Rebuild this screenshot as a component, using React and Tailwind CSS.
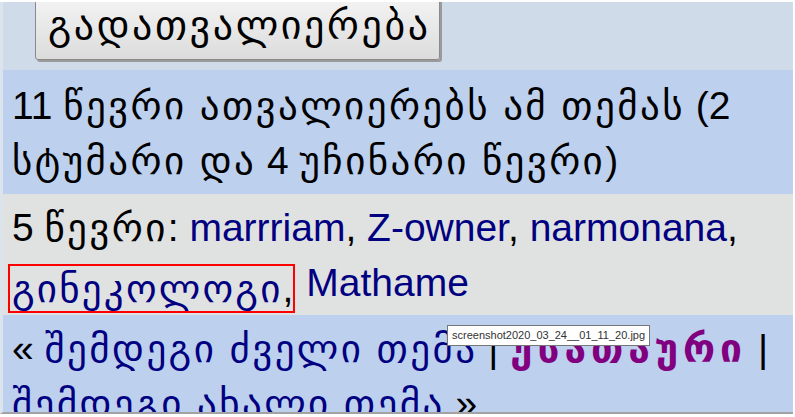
import React from 'react'

const font = "font-['Liberation_Sans','DejaVu_Sans',sans-serif]"

// Georgian runs are set a little wider, as the reference's Georgian face is
function G({ children, className = 'tracking-[2.4px]' }) {
  return <span className={className}>{children}</span>
}

export default function App() {
  return (
    <div className={`h-[417px] w-[795px] overflow-hidden bg-white ${font}`}>
      <div className="mr-[2px] mt-[2px] h-[412px] overflow-hidden border-l-[3px] border-[#dbe3ed] border-b-[2px] border-b-[#a3a3a3]">
        {/* Button row */}
        <div className="flex h-[68px] items-end overflow-hidden bg-[#cfdbe9] pb-[10px] pl-[32px]">
          <button className="h-[70px] shrink-0 rounded-[3px] border border-[#8a8a8a] bg-gradient-to-b from-[#f6f6f6] to-[#dcdcdc] pl-[12px] pr-[8px] text-[40px] leading-none text-black shadow-[2px_2px_0_#9a9a9a]">
            <G className="tracking-[2.6px]">გადათვალიერება</G>
          </button>
        </div>

        {/* Viewers */}
        <div className="bg-[#bdd0ee] px-[9px] pb-[6px] pt-[8px] text-[39px] leading-[55px] text-black">
          11 <G>წევრი ათვალიერებს ამ თემას</G> (2 <G>სტუმარი და</G> 4 <G>უჩინარი წევრი</G>)
        </div>

        {/* Members */}
        <div className="bg-[#e0e1e1] px-[9px] pb-[5px] pt-[6px] text-[39px] leading-[55px] text-black">
          5 <G>წევრი</G>: <a className="text-[#000080]">marrriam</a>, <a className="text-[#000080]">Z-owner</a>,{' '}
          <a className="text-[#000080]">narmonana</a>,{' '}
          <span className="-ml-[4px] inline-block translate-y-[6px] border-2 border-[#ff0000] pl-[2px] leading-[45px]">
            <a className="text-[#000080]">
              <G className="tracking-[2.2px]">გინეკოლოგი</G>
            </a>
            ,
          </span>{' '}
          <a className="text-[#000080]">Mathame</a>
        </div>

        {/* Navigation */}
        <div className="relative bg-[#bdd0ee] px-[9px] py-[6px] text-[39px] leading-[55px] text-black">
          « <a className="text-[#000080]"><G>შემდეგი ძველი თემა</G></a> |{' '}
          <b className="text-[#800080]"><G className="tracking-[5px]">უსათაური</G></b> |{' '}
          <a className="text-[#000080]"><G>შემდეგი ახალი თემა</G></a> »
          <div className="absolute left-[444px] top-[10px] border border-[#767676] bg-white px-[4px] py-[2px] text-[11px] leading-[15px] text-[#333]">
            screenshot2020_03_24__01_11_20.jpg
          </div>
        </div>
      </div>
    </div>
  )
}
